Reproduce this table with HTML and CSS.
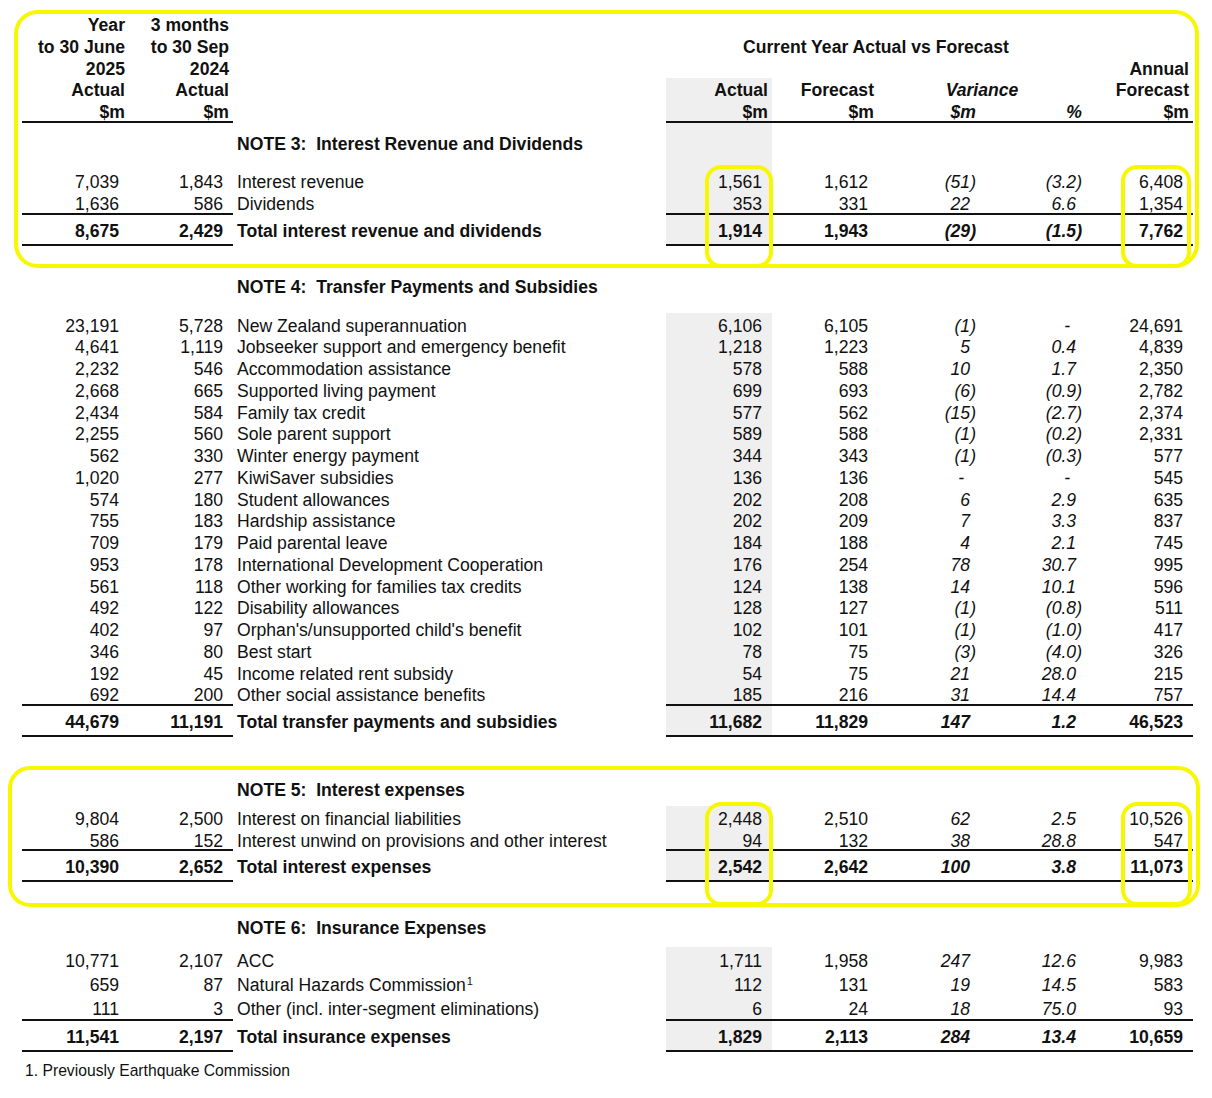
FILE: index.html
```html
<!DOCTYPE html>
<html lang="en">
<head>
<meta charset="utf-8">
<title>Notes</title>
<link rel="stylesheet" href="styles.css">
</head>
<body>
<div class="page">
<table class="fin">
<colgroup><col class="c1"><col class="c2"><col class="cl"><col class="ca"><col class="cf"><col class="cv"><col class="cp"><col class="cn"></colgroup>
<thead>
<tr class="h"><th>Year</th><th>3 months</th><th class="lbl"></th><th></th><th></th><th></th><th></th><th></th></tr>
<tr class="h"><th>to 30 June</th><th>to 30 Sep</th><th class="lbl"></th><th colspan="4" class="ctr">Current Year Actual vs Forecast</th><th></th></tr>
<tr class="h"><th>2025</th><th>2024</th><th class="lbl"></th><th></th><th></th><th></th><th></th><th>Annual</th></tr>
<tr class="h"><th>Actual</th><th>Actual</th><th class="lbl"></th><th class="sh">Actual</th><th>Forecast</th><th colspan="2" class="ctr it">Variance</th><th>Forecast</th></tr>
<tr class="h last"><th>$m</th><th>$m</th><th class="lbl"></th><th class="sh">$m</th><th>$m</th><th class="it">$m</th><th class="it">%</th><th>$m</th></tr>
</thead>
<tbody>
<tr class="title t3"><td></td><td></td><td class="lbl">NOTE 3:&nbsp; Interest Revenue and Dividends</td><td></td><td></td><td></td><td></td><td></td></tr>
<tr><td>7,039</td><td>1,843</td><td class="lbl">Interest revenue</td><td>1,561</td><td>1,612</td><td class="ng">(51)</td><td class="ng">(3.2)</td><td>6,408</td></tr>
<tr class="sub"><td>1,636</td><td>586</td><td class="lbl">Dividends</td><td>353</td><td>331</td><td>22</td><td>6.6</td><td>1,354</td></tr>
<tr class="tot"><td>8,675</td><td>2,429</td><td class="lbl">Total interest revenue and dividends</td><td>1,914</td><td>1,943</td><td class="ng">(29)</td><td class="ng">(1.5)</td><td>7,762</td></tr>

<tr class="title t4"><td></td><td></td><td class="lbl">NOTE 4:&nbsp; Transfer Payments and Subsidies</td><td></td><td></td><td></td><td></td><td></td></tr>
<tr><td>23,191</td><td>5,728</td><td class="lbl">New Zealand superannuation</td><td>6,106</td><td>6,105</td><td class="ng">(1)</td><td class="d">-</td><td>24,691</td></tr>
<tr><td>4,641</td><td>1,119</td><td class="lbl">Jobseeker support and emergency benefit</td><td>1,218</td><td>1,223</td><td>5</td><td>0.4</td><td>4,839</td></tr>
<tr><td>2,232</td><td>546</td><td class="lbl">Accommodation assistance</td><td>578</td><td>588</td><td>10</td><td>1.7</td><td>2,350</td></tr>
<tr><td>2,668</td><td>665</td><td class="lbl">Supported living payment</td><td>699</td><td>693</td><td class="ng">(6)</td><td class="ng">(0.9)</td><td>2,782</td></tr>
<tr><td>2,434</td><td>584</td><td class="lbl">Family tax credit</td><td>577</td><td>562</td><td class="ng">(15)</td><td class="ng">(2.7)</td><td>2,374</td></tr>
<tr><td>2,255</td><td>560</td><td class="lbl">Sole parent support</td><td>589</td><td>588</td><td class="ng">(1)</td><td class="ng">(0.2)</td><td>2,331</td></tr>
<tr><td>562</td><td>330</td><td class="lbl">Winter energy payment</td><td>344</td><td>343</td><td class="ng">(1)</td><td class="ng">(0.3)</td><td>577</td></tr>
<tr><td>1,020</td><td>277</td><td class="lbl">KiwiSaver subsidies</td><td>136</td><td>136</td><td class="d">-</td><td class="d">-</td><td>545</td></tr>
<tr><td>574</td><td>180</td><td class="lbl">Student allowances</td><td>202</td><td>208</td><td>6</td><td>2.9</td><td>635</td></tr>
<tr><td>755</td><td>183</td><td class="lbl">Hardship assistance</td><td>202</td><td>209</td><td>7</td><td>3.3</td><td>837</td></tr>
<tr><td>709</td><td>179</td><td class="lbl">Paid parental leave</td><td>184</td><td>188</td><td>4</td><td>2.1</td><td>745</td></tr>
<tr><td>953</td><td>178</td><td class="lbl">International Development Cooperation</td><td>176</td><td>254</td><td>78</td><td>30.7</td><td>995</td></tr>
<tr><td>561</td><td>118</td><td class="lbl">Other working for families tax credits</td><td>124</td><td>138</td><td>14</td><td>10.1</td><td>596</td></tr>
<tr><td>492</td><td>122</td><td class="lbl">Disability allowances</td><td>128</td><td>127</td><td class="ng">(1)</td><td class="ng">(0.8)</td><td>511</td></tr>
<tr><td>402</td><td>97</td><td class="lbl">Orphan's/unsupported child's benefit</td><td>102</td><td>101</td><td class="ng">(1)</td><td class="ng">(1.0)</td><td>417</td></tr>
<tr><td>346</td><td>80</td><td class="lbl">Best start</td><td>78</td><td>75</td><td class="ng">(3)</td><td class="ng">(4.0)</td><td>326</td></tr>
<tr><td>192</td><td>45</td><td class="lbl">Income related rent subsidy</td><td>54</td><td>75</td><td>21</td><td>28.0</td><td>215</td></tr>
<tr class="sub"><td>692</td><td>200</td><td class="lbl">Other social assistance benefits</td><td>185</td><td>216</td><td>31</td><td>14.4</td><td>757</td></tr>
<tr class="tot"><td>44,679</td><td>11,191</td><td class="lbl">Total transfer payments and subsidies</td><td>11,682</td><td>11,829</td><td>147</td><td>1.2</td><td>46,523</td></tr>

<tr class="title t5"><td></td><td></td><td class="lbl">NOTE 5:&nbsp; Interest expenses</td><td></td><td></td><td></td><td></td><td></td></tr>
<tr><td>9,804</td><td>2,500</td><td class="lbl">Interest on financial liabilities</td><td>2,448</td><td>2,510</td><td>62</td><td>2.5</td><td>10,526</td></tr>
<tr class="sub"><td>586</td><td>152</td><td class="lbl">Interest unwind on provisions and other interest</td><td>94</td><td>132</td><td>38</td><td>28.8</td><td>547</td></tr>
<tr class="tot"><td>10,390</td><td>2,652</td><td class="lbl">Total interest expenses</td><td>2,542</td><td>2,642</td><td>100</td><td>3.8</td><td>11,073</td></tr>

<tr class="title t6"><td></td><td></td><td class="lbl">NOTE 6:&nbsp; Insurance Expenses</td><td></td><td></td><td></td><td></td><td></td></tr>
<tr class="loose"><td>10,771</td><td>2,107</td><td class="lbl">ACC</td><td>1,711</td><td>1,958</td><td>247</td><td>12.6</td><td>9,983</td></tr>
<tr class="loose"><td>659</td><td>87</td><td class="lbl">Natural Hazards Commission<span class="sup">1</span></td><td>112</td><td>131</td><td>19</td><td>14.5</td><td>583</td></tr>
<tr class="loose sub"><td>111</td><td>3</td><td class="lbl">Other (incl. inter-segment eliminations)</td><td>6</td><td>24</td><td>18</td><td>75.0</td><td>93</td></tr>
<tr class="tot"><td>11,541</td><td>2,197</td><td class="lbl">Total insurance expenses</td><td>1,829</td><td>2,113</td><td>284</td><td>13.4</td><td>10,659</td></tr>
</tbody>
</table>
<p class="fn">1. Previously Earthquake Commission</p>

<div class="hl hl-a"></div>
<div class="hl hl-s hl-b"></div>
<div class="hl hl-s hl-c"></div>
<div class="hl hl-d"></div>
<div class="hl hl-s hl-e"></div>
<div class="hl hl-s hl-f"></div>
</div>
</body>
</html>
```

FILE: styles.css
```css
* { box-sizing: border-box; }
body {
  margin: 0;
  background: #fff;
  color: #111;
  font-family: "Liberation Sans", Arial, sans-serif;
  font-size: 17.6px;
}
.page {
  position: relative;
  width: 1212px;
  height: 1098px;
  padding: 13px 0 0 22px;
  overflow: hidden;
}
.fin {
  border-collapse: separate;
  border-spacing: 0;
  table-layout: fixed;
  width: 1171px;
}
.c1 { width: 107px; }
.c2 { width: 104px; }
.cl { width: 433px; }
.ca { width: 106px; }
.cf { width: 106px; }
.cv { width: 102px; }
.cp { width: 106px; }
.cn { width: 107px; }

th, td {
  padding: 0;
  vertical-align: top;
  white-space: nowrap;
}
th {
  font-weight: bold;
  text-align: right;
  padding: 4px 4px 0 0;
  line-height: 17.8px;
}
th.lbl { padding: 4px 0 0 0; }
th.ctr { text-align: center; padding-right: 0; }
.it { font-style: italic; }
.sh { background: #efefef; }
.h.last th { line-height: 16.5px; }
.h.last th:not(.lbl) { border-bottom: 2px solid #111; }

td {
  text-align: right;
  padding: 5px 10px 0 0;
  line-height: 16.75px;
}
td.lbl { text-align: left; padding-right: 0; padding-left: 4px; }
td.ng { padding-right: 4px; }
td.d { padding-right: 16px; }
tbody tr td:nth-child(4) { background: #efefef; }
tbody tr td:nth-child(6),
tbody tr td:nth-child(7) { font-style: italic; }

.title td { font-weight: bold; }
.title td:nth-child(4) { background: none; }
.title.t3 td:nth-child(4) { background: #efefef; }
.t3 td { padding-top: 13.5px; padding-bottom: 16.5px; }
.t4 td { padding-top: 33.5px; padding-bottom: 16.5px; }
.t5 td { padding-top: 44.5px; padding-bottom: 7.5px; }
.t6 td { padding-top: 38px; padding-bottom: 10px; }

.loose td { line-height: 19px; }
.sub td:not(.lbl) { border-bottom: 2px solid #111; }
.tot td { font-weight: bold; line-height: 19px; padding-top: 7px; padding-bottom: 3px; }
.tot td:not(.lbl) { border-bottom: 2px solid #111; }

.sup {
  font-size: 11px;
  line-height: 1;
  vertical-align: top;
  position: relative;
  top: 0;
  margin-left: 1px;
}

.fn {
  margin: 9px 0 0;
  padding-left: 3px;
  font-size: 15.7px;
  line-height: 20px;
}

.hl {
  position: absolute;
  border: 4px solid #f7f700;
  pointer-events: none;
}
.hl-s { border-radius: 16px; }
.hl-a { left: 14px; top: 10px; width: 1185px; height: 258px; border-radius: 24px; }
.hl-b { left: 705px; top: 165px; width: 68px; height: 103px; }
.hl-c { left: 1121px; top: 165px; width: 70px; height: 103px; }
.hl-d { left: 8px; top: 766px; width: 1192px; height: 141px; border-radius: 22px; }
.hl-e { left: 705px; top: 802px; width: 68px; height: 104px; }
.hl-f { left: 1121px; top: 802px; width: 71px; height: 104px; }
```
